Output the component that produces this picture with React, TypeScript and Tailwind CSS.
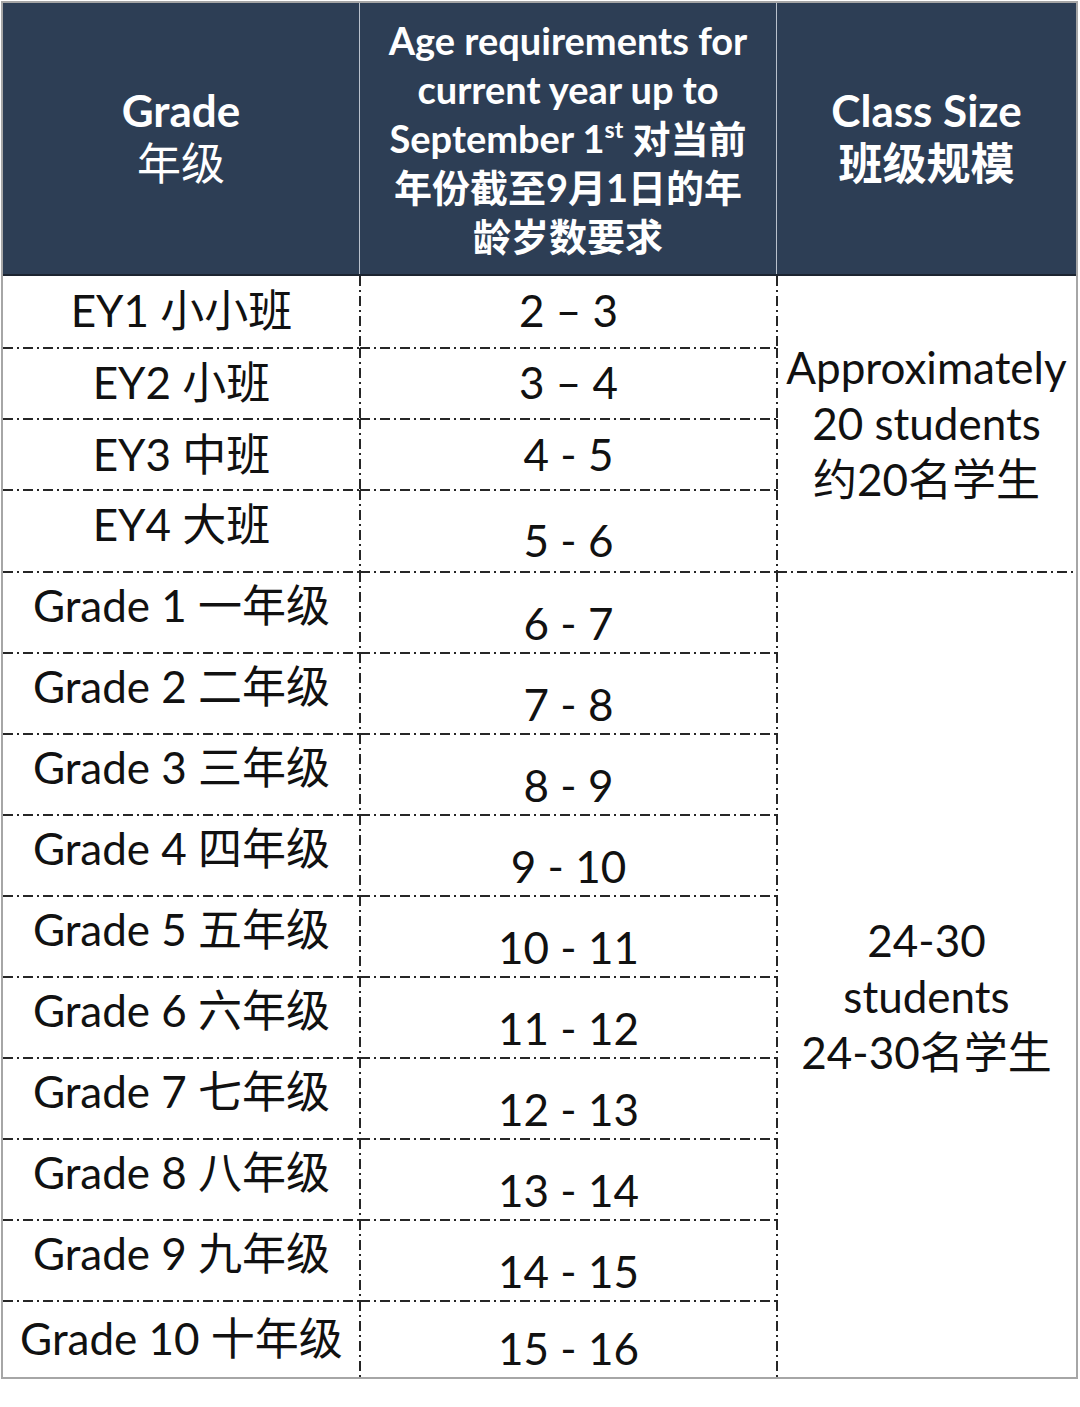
const font = "font-['Lato','Noto_Sans_CJK_SC',sans-serif]";

type Row = {
  grade: string;
  age: string;
  h: string;
  gradeCls: string;
  ageCls: string;
};

const rows: Row[] = [
  { grade: 'EY1 小小班', age: '2 – 3', h: 'h-[72px]', gradeCls: 'pb-[4px]', ageCls: 'pb-[4px]' },
  { grade: 'EY2 小班', age: '3 – 4', h: 'h-[71px]', gradeCls: 'pb-[4px]', ageCls: 'pb-[4px]' },
  { grade: 'EY3 中班', age: '4 - 5', h: 'h-[71px]', gradeCls: 'pb-[2px]', ageCls: 'pb-[2px]' },
  { grade: 'EY4 大班', age: '5 - 6', h: 'h-[82px]', gradeCls: 'pb-[14px]', ageCls: 'pt-[18px]' },
  { grade: 'Grade 1 一年级', age: '6 - 7', h: 'h-[81px]', gradeCls: 'pb-[15px]', ageCls: 'pt-[20px]' },
  { grade: 'Grade 2 二年级', age: '7 - 8', h: 'h-[81px]', gradeCls: 'pb-[15px]', ageCls: 'pt-[20px]' },
  { grade: 'Grade 3 三年级', age: '8 - 9', h: 'h-[81px]', gradeCls: 'pb-[15px]', ageCls: 'pt-[20px]' },
  { grade: 'Grade 4 四年级', age: '9 - 10', h: 'h-[81px]', gradeCls: 'pb-[15px]', ageCls: 'pt-[20px]' },
  { grade: 'Grade 5 五年级', age: '10 - 11', h: 'h-[81px]', gradeCls: 'pb-[15px]', ageCls: 'pt-[20px]' },
  { grade: 'Grade 6 六年级', age: '11 - 12', h: 'h-[81px]', gradeCls: 'pb-[15px]', ageCls: 'pt-[20px]' },
  { grade: 'Grade 7 七年级', age: '12 - 13', h: 'h-[81px]', gradeCls: 'pb-[15px]', ageCls: 'pt-[20px]' },
  { grade: 'Grade 8 八年级', age: '13 - 14', h: 'h-[81px]', gradeCls: 'pb-[15px]', ageCls: 'pt-[20px]' },
  { grade: 'Grade 9 九年级', age: '14 - 15', h: 'h-[81px]', gradeCls: 'pb-[15px]', ageCls: 'pt-[20px]' },
  { grade: 'Grade 10 十年级', age: '15 - 16', h: 'h-[76px]', gradeCls: 'pb-[2px]', ageCls: 'pt-[18px]' },
];

// dash-dot rules, drawn over the cell edges
function HRule() {
  return (
    <span className="absolute inset-x-0 bottom-[-1px] h-[2px] bg-[repeating-linear-gradient(90deg,#262626_0_10px,transparent_10px_14px,#262626_14px_16px,transparent_16px_20px)]" />
  );
}
function VRule() {
  return (
    <span className="absolute inset-y-0 right-[-1px] w-[2px] bg-[repeating-linear-gradient(180deg,#262626_0_10px,transparent_10px_14px,#262626_14px_16px,transparent_16px_20px)]" />
  );
}

function Cell({ children, cls, last }: { children: React.ReactNode; cls: string; last: boolean }) {
  return (
    <div className={`relative flex items-center justify-center ${cls}`}>
      <div className="whitespace-nowrap leading-none">{children}</div>
      {!last && <HRule />}
      <VRule />
    </div>
  );
}

export default function App() {
  return (
    <div className={`min-h-[1407px] bg-white pl-[1px] pt-[1px] ${font}`}>
      <div className="w-[1077px] border-2 border-[#a6a6a6]">
        {/* Header */}
        <div className="flex h-[273px] bg-[#2d3e55] border-b-2 border-[#1c2430] text-white font-bold">
          <div className="w-[357px] flex flex-col items-center justify-center text-[44px] leading-[53px] pb-[4px] border-r border-[#b9c1cc]">
            <div>Grade</div>
            <div className="font-normal">年级</div>
          </div>
          <div className="w-[417px] flex flex-col items-center justify-center text-[38px] leading-[49px] border-r border-[#b9c1cc] text-center">
            <div>Age requirements for</div>
            <div>current year up to</div>
            <div>
              September 1<sup className="text-[23px] top-[-15px]">st</sup> 对当前
            </div>
            <div>年份截至9月1日的年</div>
            <div>龄岁数要求</div>
          </div>
          <div className="flex-1 flex flex-col items-center justify-center text-[44px] leading-[53px] pb-[4px]">
            <div>Class Size</div>
            <div>班级规模</div>
          </div>
        </div>

        {/* Body */}
        <div className="flex text-[44px] text-[#111]">
          <div className="w-[774px] flex flex-col">
            {rows.map((r, i) => (
              <div key={r.grade} className={`flex ${r.h}`}>
                <Cell cls={`w-[357px] ${r.gradeCls}`} last={i === rows.length - 1}>
                  {r.grade}
                </Cell>
                <Cell cls={`w-[417px] ${r.ageCls}`} last={i === rows.length - 1}>
                  {r.age}
                </Cell>
              </div>
            ))}
          </div>
          <div className="flex-1 flex flex-col text-center leading-[56px]">
            <div className="relative h-[296px] flex flex-col items-center justify-center pb-[2px]">
              <div>Approximately</div>
              <div>20 students</div>
              <div>约20名学生</div>
              <HRule />
            </div>
            <div className="flex-1 flex flex-col items-center justify-center pt-[42px]">
              <div>24-30</div>
              <div>students</div>
              <div>24-30名学生</div>
            </div>
          </div>
        </div>
      </div>
    </div>
  );
}
